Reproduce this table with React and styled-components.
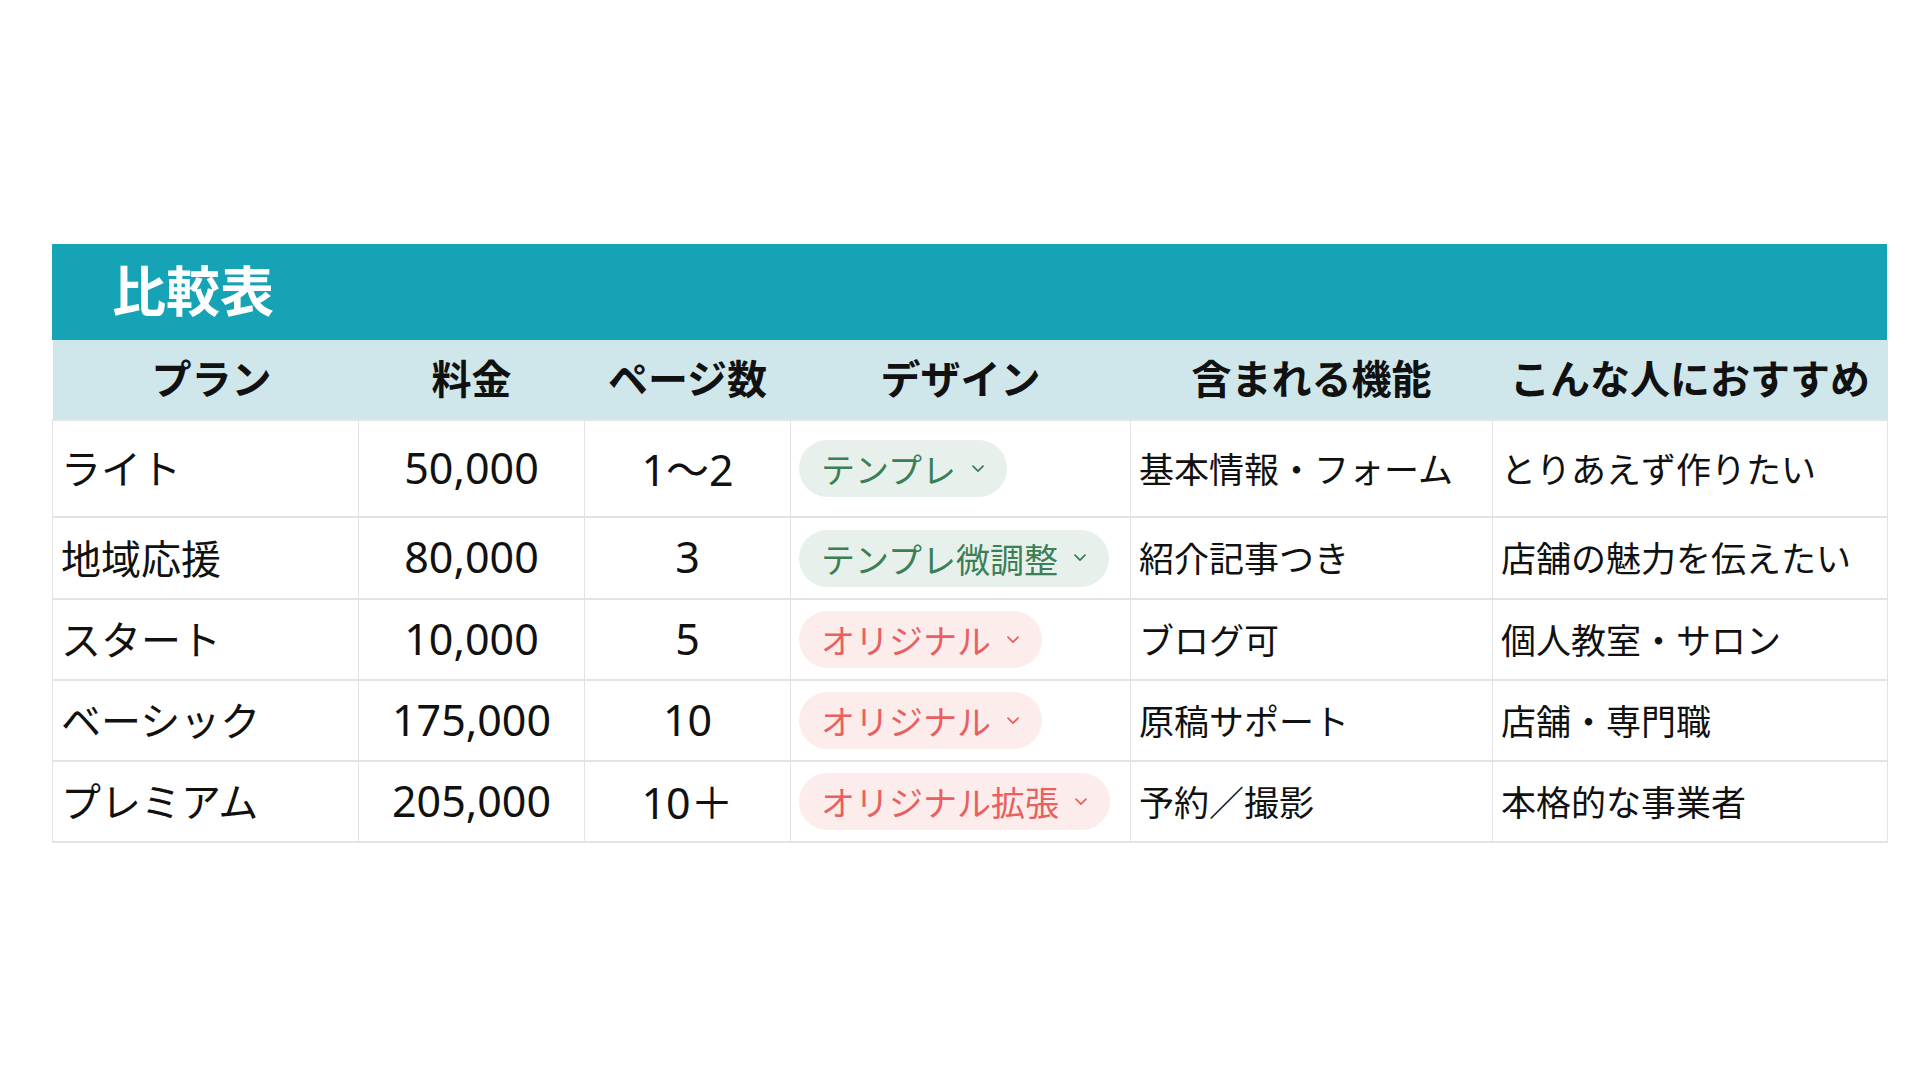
import React from "react";
import styled, { createGlobalStyle } from "styled-components";

const Global = createGlobalStyle`
  html, body { margin: 0; padding: 0; background: #ffffff; }
  body { font-family: "Noto Sans", "Noto Sans CJK JP", sans-serif; color: #111; }
`;

const Page = styled.div`
  width: 1920px;
  height: 1080px;
  box-sizing: border-box;
  padding: 244px 0 0 52px;
`;

const Board = styled.section`
  width: 1835px;
`;

const TitleBar = styled.h1`
  margin: 0;
  height: 96px;
  box-sizing: border-box;
  display: flex;
  align-items: center;
  padding: 0 0 8px 60px;
  background: #16a3b5;
  color: #ffffff;
  font-family: "Noto Sans CJK JP", sans-serif;
  font-weight: 700;
  font-size: 54px;
`;

const Table = styled.table`
  width: 1835px;
  table-layout: fixed;
  border-collapse: collapse;
`;

const HeadRow = styled.tr`
  height: 80px;
  background: #cfe6ea;
`;

const Th = styled.th`
  padding: 0 0 6px ${(p) => (p.$indent ? 12 : 0)}px;
  font-family: "Noto Sans CJK JP", sans-serif;
  font-weight: 700;
  font-size: 40px;
  text-align: center;
  color: #111;
  white-space: nowrap;
`;

const Row = styled.tr`
  height: ${(p) => p.$h}px;
  border-top: 2px solid #e4e4e4;
  &:last-child { border-bottom: 2px solid #e4e4e4; }
`;

const Td = styled.td`
  padding: 0 8px 3px;
  border-left: 1px solid #e2e2e2;
  border-right: 1px solid #e2e2e2;
  font-family: "Noto Sans CJK JP", sans-serif;
  font-size: ${(p) => (p.$small ? 35 : 40)}px;
  text-align: left;
  white-space: nowrap;
  color: #111;
  vertical-align: middle;
`;

const NumTd = styled.td`
  padding: 0 8px 3px;
  border-left: 1px solid #e2e2e2;
  border-right: 1px solid #e2e2e2;
  font-family: "Noto Sans", "Noto Sans CJK JP", sans-serif;
  font-size: 43px;
  text-align: center;
  white-space: nowrap;
  color: #111;
  vertical-align: middle;
`;

const BadgeCell = styled.td`
  padding: 0 8px;
  border-left: 1px solid #e2e2e2;
  border-right: 1px solid #e2e2e2;
  vertical-align: middle;
`;

const Badge = styled.span`
  display: inline-flex;
  align-items: center;
  gap: 16px;
  height: 57px;
  padding: 0 23px 0 22px;
  border-radius: 29px;
  font-family: "Noto Sans CJK JP", sans-serif;
  font-size: 34px;
  white-space: nowrap;
  background: ${(p) => (p.$tone === "green" ? "#e8f0eb" : "#fdecec")};
  color: ${(p) => (p.$tone === "green" ? "#3b7f56" : "#e8605f")};
`;

const Chevron = ({ color }) => (
  <svg width="12" height="8" viewBox="0 0 12 8" fill="none">
    <path d="M1 1.2 L6 6.2 L11 1.2" stroke={color} strokeWidth="1.7" strokeLinecap="round" strokeLinejoin="round" />
  </svg>
);

const rows = [
  { h: 97, name: "ライト", price: "50,000", pages: "1〜2", design: "テンプレ", tone: "green", feat: "基本情報・フォーム", who: "とりあえず作りたい" },
  { h: 82, name: "地域応援", price: "80,000", pages: "3", design: "テンプレ微調整", tone: "green", feat: "紹介記事つき", who: "店舗の魅力を伝えたい" },
  { h: 81, name: "スタート", price: "10,000", pages: "5", design: "オリジナル", tone: "red", feat: "ブログ可", who: "個人教室・サロン" },
  { h: 81, name: "ベーシック", price: "175,000", pages: "10", design: "オリジナル", tone: "red", feat: "原稿サポート", who: "店舗・専門職" },
  { h: 81, name: "プレミアム", price: "205,000", pages: "10＋", design: "オリジナル拡張", tone: "red", feat: "予約／撮影", who: "本格的な事業者" },
];

export default function App() {
  return (
    <>
      <Global />
      <Page>
        <Board>
          <TitleBar>比較表</TitleBar>
          <Table>
            <colgroup>
              <col style={{ width: 306 }} />
              <col style={{ width: 226 }} />
              <col style={{ width: 206 }} />
              <col style={{ width: 340 }} />
              <col style={{ width: 362 }} />
              <col style={{ width: 395 }} />
            </colgroup>
            <thead>
              <HeadRow>
                <Th $indent>プラン</Th>
                <Th>料金</Th>
                <Th>ページ数</Th>
                <Th>デザイン</Th>
                <Th>含まれる機能</Th>
                <Th>こんな人におすすめ</Th>
              </HeadRow>
            </thead>
            <tbody>
              {rows.map((r) => (
                <Row key={r.name} $h={r.h}>
                  <Td>{r.name}</Td>
                  <NumTd>{r.price}</NumTd>
                  <NumTd>{r.pages}</NumTd>
                  <BadgeCell>
                    <Badge $tone={r.tone}>
                      {r.design}
                      <Chevron color={r.tone === "green" ? "#3b7f56" : "#e8605f"} />
                    </Badge>
                  </BadgeCell>
                  <Td $small>{r.feat}</Td>
                  <Td $small>{r.who}</Td>
                </Row>
              ))}
            </tbody>
          </Table>
        </Board>
      </Page>
    </>
  );
}
